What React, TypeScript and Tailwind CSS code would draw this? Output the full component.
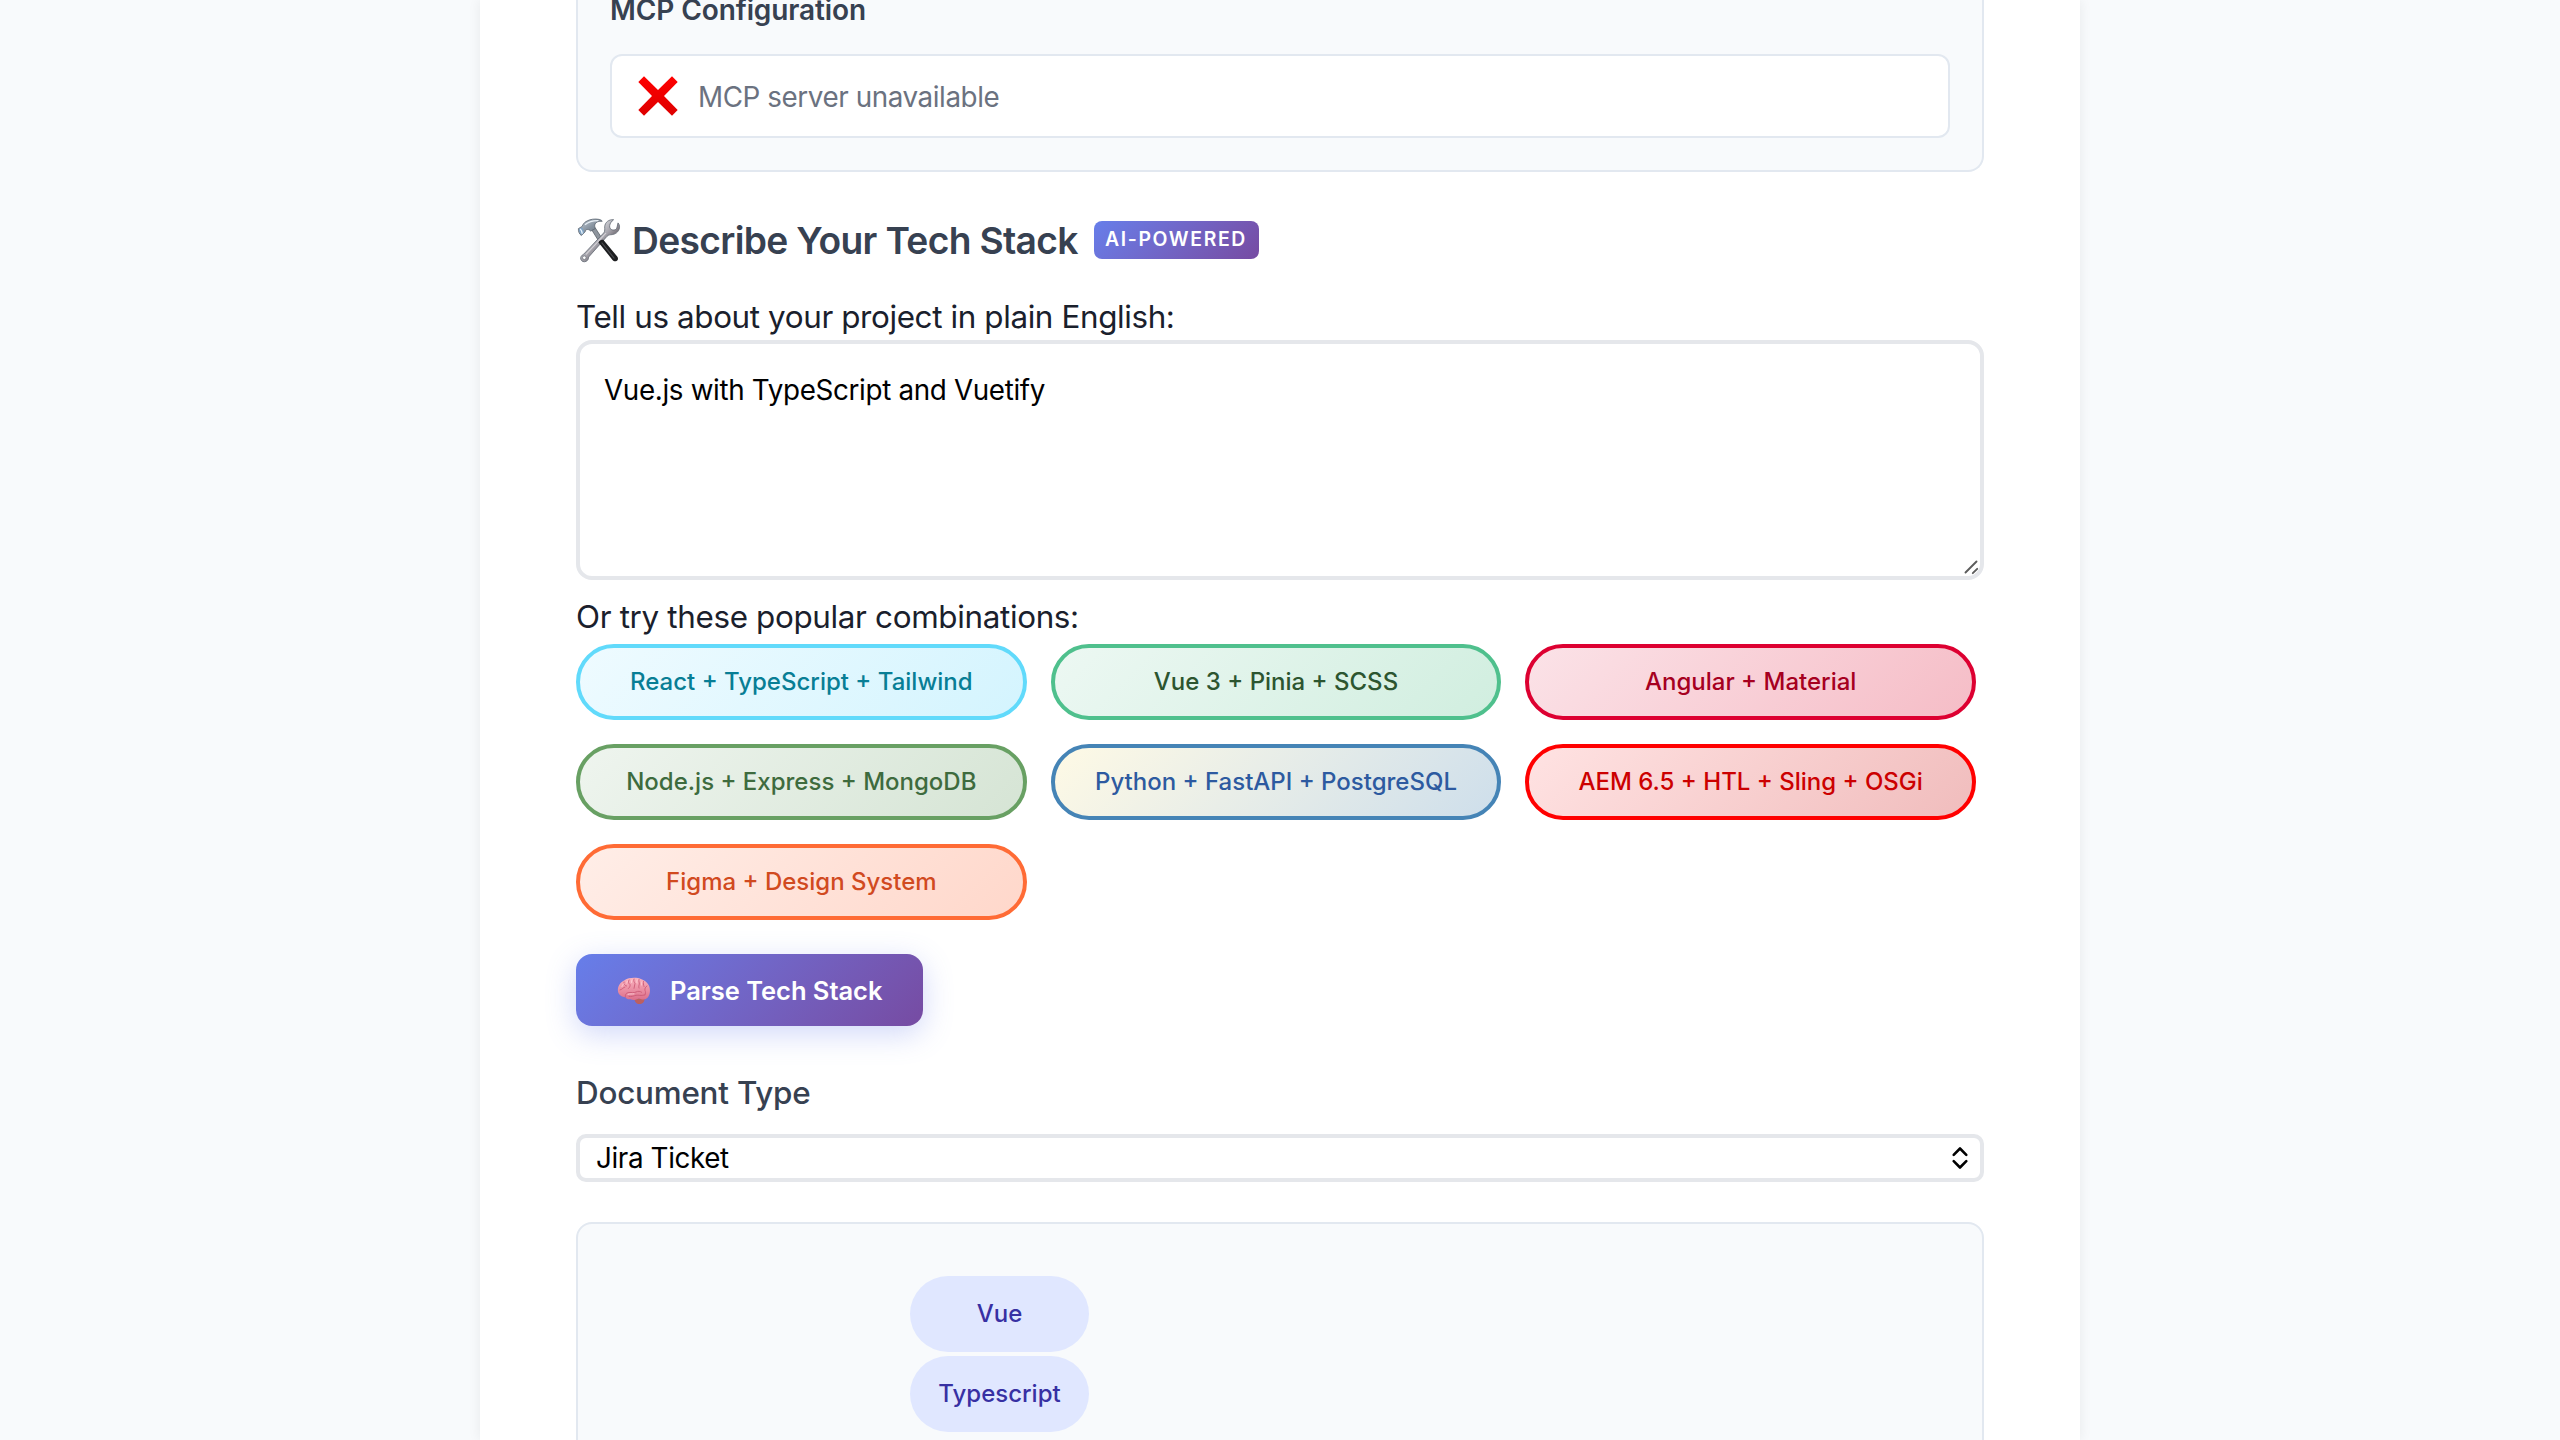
import type { ReactNode } from 'react';

function CrossMark() {
  return (
    <svg width="40" height="40" viewBox="0 0 40 40" className="shrink-0">
      <defs>
        <linearGradient id="cross" x1="0" y1="0" x2="0" y2="1">
          <stop offset="0" stopColor="#ff0000" />
          <stop offset="1" stopColor="#dd0000" />
        </linearGradient>
      </defs>
      <path
        d="M6 .3 20 14 34 .3 39.7 6 26 20 39.7 34 34 39.7 20 26 6 39.7 .3 34 14 20 .3 6Z"
        fill="url(#cross)"
      />
    </svg>
  );
}

function ToolsIcon() {
  return (
    <svg width="46" height="46" viewBox="0 0 46 46" className="shrink-0">
      <defs>
        <linearGradient id="steel" x1="0" y1="0" x2="1" y2="1">
          <stop offset="0" stopColor="#c9d3dc" />
          <stop offset=".5" stopColor="#8793a0" />
          <stop offset="1" stopColor="#5f6a76" />
        </linearGradient>
        <linearGradient id="shaft" x1="0" y1="0" x2="1" y2="1">
          <stop offset=".3" stopColor="#d8dbe0" />
          <stop offset=".5" stopColor="#a5a3ab" />
          <stop offset=".7" stopColor="#5d565c" />
        </linearGradient>
      </defs>
      <path d="M15.5 12.5 19 10.5 28 24.5 24.5 27Z" fill="#8e959d" stroke="#4d545c" strokeWidth=".7" />
      <path
        d="M37.600 2.700C33 2.200 28.900 5.200 28.700 9.900c-.1 2.300.5 3.900-.9 5.900L7.700 37.200c-2.300 1.100-3.500 3-2.900 5 .7 2.300 3.200 3.200 5.400 2.100 1.800-.9 2.400-2.500 2.400-4.200L31 19.300c1.500-1.500 3-1.500 5.200-1.700 4.500-.6 7.600-4.200 7.300-8.300-.1-1.400-.6-2.400-1.500-3.400l-.9 4.200c-.5 2.200-2.200 3.200-4.300 2.900-2.300-.4-3.600-2.200-3.100-4.500.4-2.300 1.800-4.200 3.900-5.800Z"
        fill="url(#shaft)"
        stroke="#5f6771"
        strokeWidth=".8"
      />
      <path d="M30 16 10 37.500" stroke="#e6e3e6" strokeWidth="1.100" opacity=".8" />
      <circle cx="8.300" cy="40.700" r="1.800" fill="#fff" stroke="#6b7079" strokeWidth=".7" />
      <path d="M22.500 25.500c1.200-2.400 3-3.300 5-2.600L41.200 39.500c1.200 1.600 1 3.300-.3 4.200-1.500 1-3.300.7-4.400-.8Z" fill="#1d1e20" />
      <path d="M26 26 38 41" stroke="#4b4c50" strokeWidth="1.200" strokeLinecap="round" />
      <path
        d="M2.400 11.600 6.200 9.400c.6-1.900 1.700-3.500 3.700-4.800 4.200-2.600 9-3 13.300-2.200 1.600.4 2.800 1.100 3 1.900-3.500-.4-6 .6-7.200 2.700-.6 1.500-.2 3.100.3 4.600l-4.600 2.500c-1.300-1.400-2.600-1.900-4.200-1.400-.8.3-1.300 1-1.300 2L5.400 18.500C3.200 17.100 2.200 14.400 2.400 11.600Z"
        fill="url(#steel)"
        stroke="#59636e"
        strokeWidth=".8"
      />
      <path d="M2.900 12 6 10.400c1.400 1.500 2 3.200 2 5.200l-2.500 2.100C3.700 16.400 2.800 14.300 2.900 12Z" fill="#7fa3c4" />
      <path d="M4.200 11.900c1.200 1.300 1.900 2.800 2.100 4.800" stroke="#e9f4fd" strokeWidth="1.300" fill="none" />
      <path d="M9 7.800c4-3.500 8-4.300 13.500-4.200" stroke="#e8eff5" strokeWidth="1.200" fill="none" />
    </svg>
  );
}

function BrainIcon() {
  return (
    <svg width="34" height="28" viewBox="0 0 34 28" className="mt-0.5 shrink-0">
      <defs>
        <linearGradient id="brain" x1="0" y1="0" x2="0" y2="1">
          <stop offset="0" stopColor="#fbb3bf" />
          <stop offset="1" stopColor="#dc6f8b" />
        </linearGradient>
      </defs>
      <path d="M17.500 21.500c0 3.500 2.200 5.800 5.200 5.600 3.400-.2 5.300-2.700 4.700-6.100Z" fill="#bd5f60" />
      <path
        d="M1 14.500C.3 9.800 2.800 5.300 7.500 3.200 12 .4 19.500 0 24.500 2.200c4.500 1.500 7.800 5 8.300 9.500.7 4.500-1 8.800-4 10.300-2.300 1-4.800 0-7-.6-2.800 1.400-5.600 2.200-8.400.8-1.900.5-4-.2-4.900-1.900C4.800 20 1.600 17.800 1 14.500Z"
        fill="url(#brain)"
      />
      <g fill="none" stroke="#cc5a76" strokeWidth=".9" strokeLinecap="round">
        <path d="M8.500 20c-.8-2.600 1-4.300 3.500-4.500 2.800-.2 4.600.7 7-.5 2.200-1.100 4-.8 5.600.2" />
        <path d="M12 19.500c2.500.6 4.600-.7 7-1.200 2.500-.5 5 .8 8.500-.3" />
        <path d="M3 13c2.400-.5 3-2.600 5-3M7 5c-.3 2 .7 3.500 2.500 4M12 3c-1 1.700-.5 3.400 1 4.500.4 1.500-.4 3-1.600 4" />
        <path d="M17 2c-.8 2 .3 3.200 1 4.500-.2 2-.8 3-1 4.800M22 2.500c-.6 1.800.5 3 .3 4.600-.4 1.500-.8 2.800-.3 4M26.500 4.500c-.5 1.600 0 3.500.5 5M30 9c-1.600 1-2.500 2.500-2 4.500.8 1.400.5 3 0 4.500" />
      </g>
      <g fill="none" stroke="#ffd0d6" strokeWidth=".9" strokeLinecap="round">
        <path d="M5 9.500c.6-1.800 1.500-2.800 2-3M9.700 6c.2-1.200.5-1.800 1.100-2.300M14.500 5.500c-.1-1.200.1-2 .5-2.600M20 6c-.4-1.300-.2-2.300.2-3.100M24.500 8c.1-1.400 0-2.300.2-3" />
        <path d="M11 17.300c1.900-.6 4-.2 6-.4" />
      </g>
    </svg>
  );
}

function ResizeGrip() {
  return (
    <svg width="16" height="16" viewBox="0 0 16 16" className="pointer-events-none absolute right-[5px] bottom-[5px]">
      <path d="M2.500 13.500 13.500 2.500M9.800 14.200 14.200 9.800" stroke="#5c5c5c" strokeWidth="1.900" strokeLinecap="round" />
    </svg>
  );
}

function UpDownArrows() {
  return (
    <svg width="18" height="24" viewBox="0 0 18 24" className="shrink-0">
      <path
        d="M2.700 8.800 9 2.500 15.300 8.800M2.700 15.200 9 21.500 15.300 15.200"
        fill="none"
        stroke="#000"
        strokeWidth="2.600"
        strokeLinecap="round"
        strokeLinejoin="round"
      />
    </svg>
  );
}

const presets = [
  { label: 'React + TypeScript + Tailwind', style: 'border-[#61dafb] from-[#effbff] to-[#d3f4fe] text-[#087e95]' },
  { label: 'Vue 3 + Pinia + SCSS', style: 'border-[#4fc08d] from-[#edf8f3] to-[#d0eedf] text-[#2c5530]' },
  { label: 'Angular + Material', style: 'border-[#dd0031] from-[#fbe3e8] to-[#f5bcc6] text-[#a6001f]' },
  { label: 'Node.js + Express + MongoDB', style: 'border-[#68a063] from-[#eff5ef] to-[#d5e4d4] text-[#3e6b3e]' },
  { label: 'Python + FastAPI + PostgreSQL', style: 'border-[#4584b6] from-[#fffae5] to-[#cddeeb] text-[#2d5aa0]' },
  { label: 'AEM 6.5 + HTL + Sling + OSGi', style: 'border-[#ff0000] from-[#ffe3e3] to-[#f0bcbc] text-[#cc0000]' },
  { label: 'Figma + Design System', style: 'border-[#ff6b35] from-[#ffeee8] to-[#ffd7ca] text-[#d14a1f]' },
];

function Chip({ children }: { children: ReactNode }) {
  return (
    <div className="flex h-[76px] w-[179px] items-center justify-center rounded-full bg-[#e0e7ff] text-[24px] font-medium text-[#3730a3]">
      {children}
    </div>
  );
}

export default function App() {
  return (
    <div className="flex h-[1440px] w-[2560px] justify-center overflow-hidden bg-[#f8fafc] font-['Inter',sans-serif] text-[#1a202c]">
      <main className="flex h-full w-[1600px] flex-col bg-white px-24 shadow-[0_0_12px_rgba(0,0,0,0.07)]">
        <section className="h-[172px] shrink-0 rounded-b-2xl border-2 border-t-0 border-[#e2e8f0] bg-[#f8fafc] px-8">
          <h4 className="-mt-1.5 h-8 text-[28px] leading-8 font-semibold tracking-[-0.1px] whitespace-nowrap text-[#374151]">
            MCP Configuration
          </h4>
          <div className="mt-7 flex h-[84px] items-center gap-5 rounded-xl border-2 border-[#e2e8f0] bg-white pl-[26px]">
            <CrossMark />
            <span className="pt-[3px] text-[27.8px] tracking-[-0.42px] text-[#6b7280]">MCP server unavailable</span>
          </div>
        </section>

        <div className="mt-11 flex h-12 shrink-0 items-center">
          <ToolsIcon />
          <h3 className="ml-2.5 w-[462px] pt-0.5 text-[37.2px] leading-[48px] font-semibold tracking-[-0.67px] whitespace-nowrap text-[#374151]">
            Describe Your Tech Stack
          </h3>
          <span className="flex h-[38px] w-[165px] items-center rounded-lg bg-linear-135 from-[#667eea] to-[#764ba2] pl-[11px] text-[19.4px] font-semibold tracking-[1.65px] text-white">
            AI-POWERED
          </span>
        </div>

        <label className="mt-[29px] h-[47px] shrink-0 pt-px text-[31.4px] leading-[47px] tracking-[-0.38px]">
          Tell us about your project in plain English:
        </label>
        <div className="relative h-60 shrink-0">
          <textarea
            className="block h-full w-full resize-none rounded-2xl border-4 border-[#e5e7eb] px-6 pt-[26px] text-[27.8px] leading-10 tracking-[-0.34px] text-black outline-none"
            defaultValue="Vue.js with TypeScript and Vuetify"
            spellCheck={false}
          />
          <ResizeGrip />
        </div>

        <div className="mt-[9px] h-[55px] shrink-0 pt-px text-[31.4px] leading-[55px] tracking-[-0.34px]">
          Or try these popular combinations:
        </div>
        <div className="grid w-[1400px] shrink-0 grid-cols-3 gap-6">
          {presets.map((p) => (
            <button
              key={p.label}
              className={`h-[76px] rounded-full border-4 bg-linear-135 bg-origin-border text-[24px] font-medium whitespace-nowrap ${p.style}`}
            >
              {p.label}
            </button>
          ))}
        </div>

        <button className="mt-[34px] flex h-18 w-[347px] shrink-0 items-center rounded-2xl bg-linear-135 from-[#667eea] to-[#764ba2] pl-[41px] text-[25.5px] font-semibold tracking-[-0.04px] text-white shadow-[0_8px_30px_rgba(102,126,234,0.3)]">
          <BrainIcon />
          <span className="ml-[19px] pt-0.5">Parse Tech Stack</span>
        </button>

        <label className="mt-[46px] h-[41px] shrink-0 pt-px text-[31.4px] leading-[41px] font-medium tracking-[-0.22px] text-[#374151]">
          Document Type
        </label>
        <div className="mt-[21px] flex h-12 shrink-0 items-center justify-between rounded-[10px] border-4 border-[#e5e7eb] bg-white pr-[11px] pl-4 text-[27.8px] leading-10 tracking-[-0.38px] text-black">
          <span>Jira Ticket</span>
          <UpDownArrows />
        </div>

        <section className="mt-10 flex h-[300px] shrink-0 flex-col gap-1 rounded-2xl border-2 border-[#e2e8f0] bg-[#f8fafc] pt-[52px] pl-[332px]">
          <Chip>Vue</Chip>
          <Chip>Typescript</Chip>
        </section>
      </main>
    </div>
  );
}
